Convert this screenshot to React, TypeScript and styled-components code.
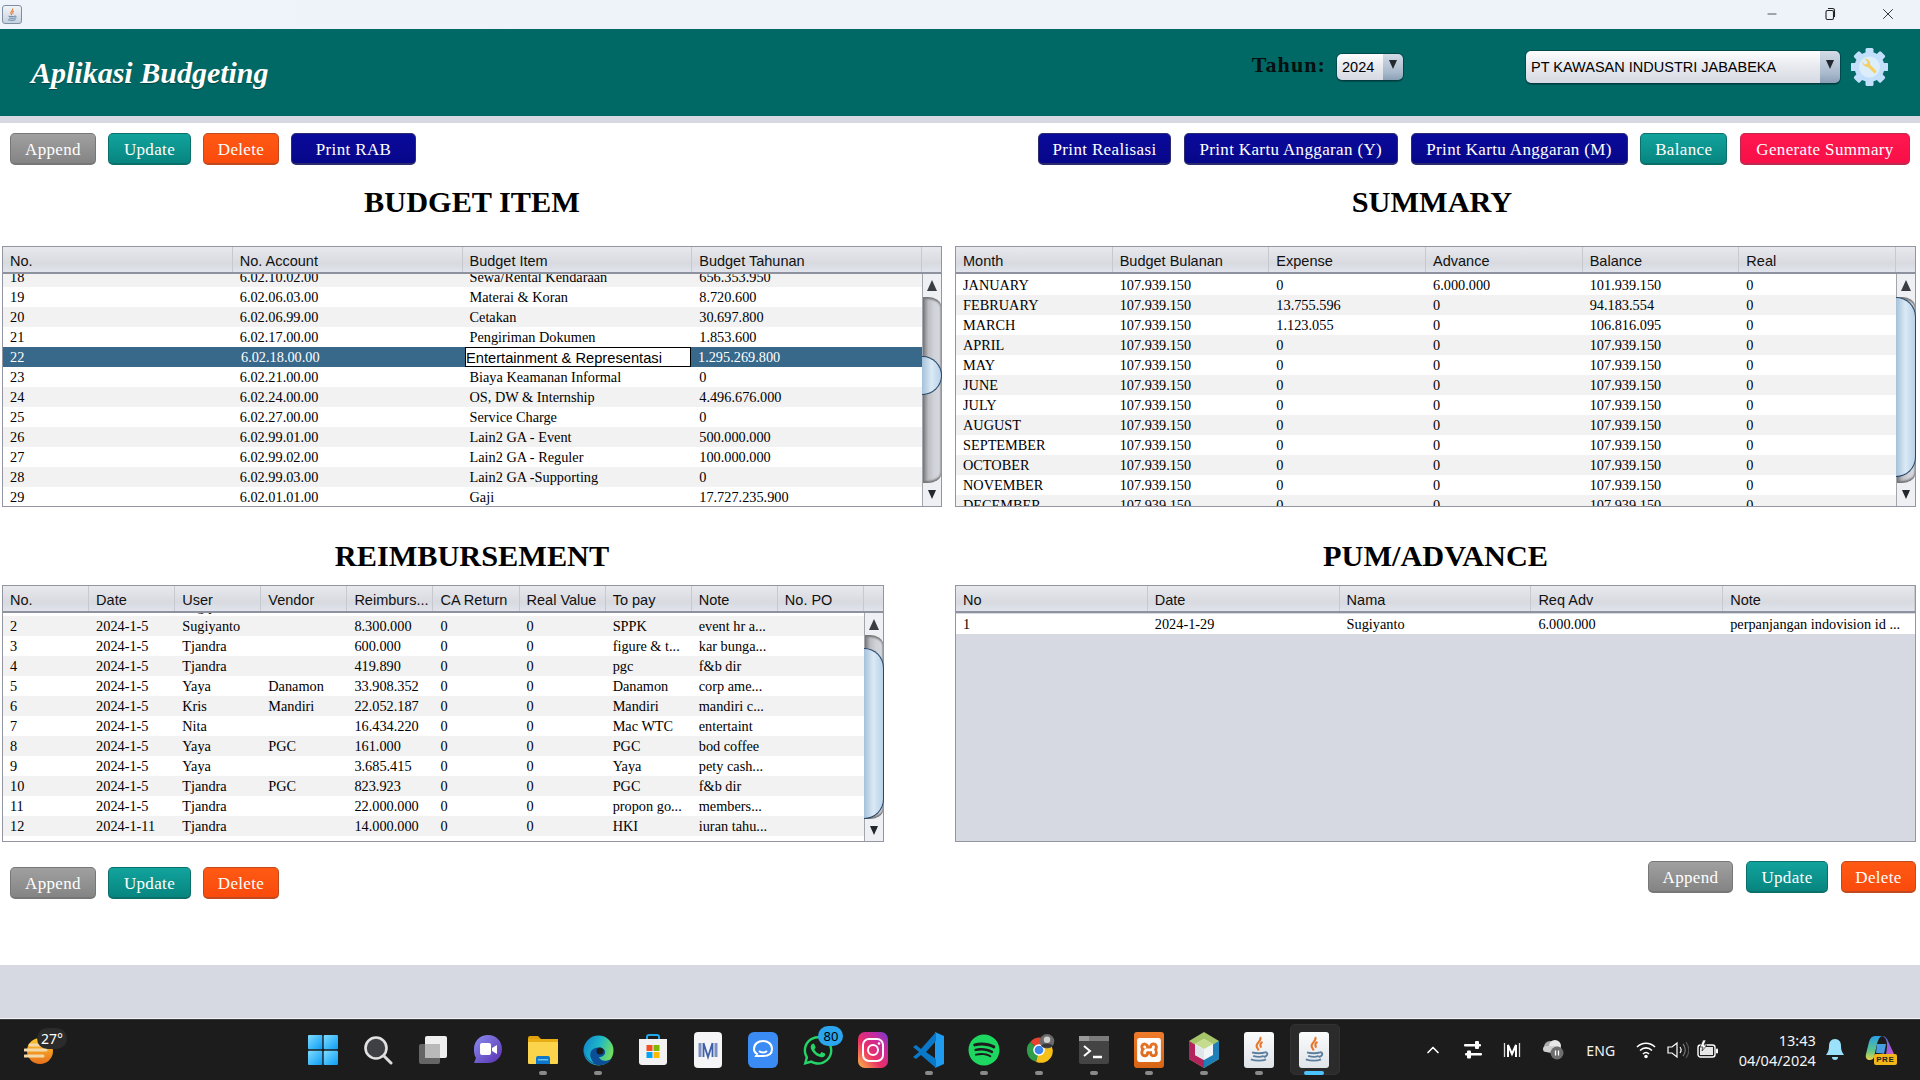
import React from "react";
import styled, { createGlobalStyle } from "styled-components";
import { FaWhatsapp, FaSpotify } from "react-icons/fa";
import { SiXampp } from "react-icons/si";
import { ChevronUp, Minus, X } from "lucide-react";

const Global = createGlobalStyle`
  html, body { margin: 0; padding: 0; height: 100%; overflow: hidden; background: #fff; }
  #root { height: 100%; }
  * { box-sizing: border-box; }
`;
const SERIF = `"Liberation Serif", "Times New Roman", serif`;
const SANS = `"Liberation Sans", Arial, sans-serif`;

const Screen = styled.div`
  width: 1920px; height: 1080px; display: flex; flex-direction: column; overflow: hidden; background: #fff; font-family: ${SERIF};
`;
const TitleBar = styled.div`
  height: 29px; flex: none; display: flex; align-items: center; padding: 0 3px 0 2px;
  background: linear-gradient(90deg, #eff3fa, #eef3fa 50%, #edf3f8);
`;
const AppIcon = styled.div`
  width: 20px; height: 19px; border: 1px solid #7f8ea3; border-radius: 3px; background: linear-gradient(#f2f5f8, #c6d2e0);
  display: flex; align-items: center; justify-content: center;
`;
const WinControls = styled.div`margin-left: auto; display: flex;`;
const WinBtn = styled.div`width: 58px; height: 29px; display: flex; align-items: center; justify-content: center; color: #222; padding-bottom: 2px;`;

const Header = styled.header`
  height: 87px; flex: none; background: #006966; display: flex; align-items: center; padding: 0 32px 0 31px;
`;
const AppTitle = styled.h1`
  margin: 0; flex: 1; color: #fff; font: italic bold 30px ${SERIF}; text-shadow: 0 1px 1px rgba(0,0,0,.35);
`;
const HeaderRight = styled.div`display: flex; align-items: center; padding-bottom: 12px;`;
const YearLabel = styled.span`
  font: bold 22px ${SERIF}; letter-spacing: 1.1px; color: #06100f; margin-right: 11px; padding-bottom: 3px;
`;
const Combo = styled.div<{ $w: number; $h: number; $gap: number }>`
  width: ${p => p.$w}px; height: ${p => p.$h}px; margin-right: ${p => p.$gap}px; display: flex; border-radius: 5px; overflow: hidden;
  box-shadow: 0 0 0 1px rgba(0,40,50,.45), 0 2px 1px rgba(0,0,0,.25); font: 14.5px ${SANS}; color: #000;
`;
const ComboValue = styled.div`
  flex: 1; display: flex; align-items: center; padding-left: 5px; white-space: nowrap;
  background: linear-gradient(#fdfdfe 0, #e9ebf0 45%, #d6d9e2 100%);
`;
const ComboArrow = styled.div`
  width: 20px; display: flex; align-items: center; justify-content: center; padding-bottom: 4px;
  background: linear-gradient(#d3dbe6, #a9bacd 70%, #8b9fb5);
`;
const TriDown = styled.span`
  width: 0; height: 0; border-left: 4px solid transparent; border-right: 4px solid transparent; border-top: 9px solid #23282e;
`;
const TriUp = styled.span`
  width: 0; height: 0; border-left: 5px solid transparent; border-right: 5px solid transparent; border-bottom: 11px solid #3a3e44;
`;
const Strip = styled.div`height: 7px; flex: none; background: #d6d9e2;`;

const Content = styled.main`flex: 1; min-height: 0; display: flex; flex-direction: column;`;
const Toolbar = styled.div`
  flex: none; display: flex; justify-content: space-between; padding: 10px 10px 0;
`;
const BtnGroup = styled.div<{ $gap: number }>`display: flex; gap: ${p => p.$gap}px;`;
const tones = {
  gray: ["#a0a0a0", "#848484", "#777"],
  teal: ["#12a39d", "#07857f", "#0b6f6b"],
  orange: ["#ff5a14", "#f94a0c", "#c04a1d"],
  navy: ["#0a0a9c", "#07078a", "#2b2b6e"],
  red: ["#ff1750", "#f80f48", "#bd2a50"],
};
type Tone = keyof typeof tones;
const Btn = styled.button<{ $tone: Tone; $w: number }>`
  width: ${p => p.$w}px; height: 32px; padding: 2px 0 0; border-radius: 5px; color: #fff; cursor: pointer;
  font: 17px ${SERIF}; letter-spacing: .35px; white-space: nowrap;
  background: linear-gradient(${p => tones[p.$tone][0]}, ${p => tones[p.$tone][1]});
  border: 1px solid ${p => tones[p.$tone][2]}; border-bottom-width: 2px;
`;
const Sections = styled.div`
  display: grid; grid-template-columns: 940px 961px; column-gap: 13px; padding: 0 4px 0 2px;
`;
const Cell = styled.section``;
const Heading = styled.h2<{ $h: number; $pt?: number; $pb?: number; $shift?: number }>`
  margin: 0; height: ${p => p.$h}px; padding: ${p => p.$pt ?? 0}px ${p => p.$shift ?? 0}px ${p => p.$pb ?? 0}px 0;
  display: flex; align-items: center; justify-content: center; font: bold 30.3px ${SERIF}; color: #000;
`;
const Frame = styled.div<{ $h: number; $w?: number; $fill?: boolean }>`
  height: ${p => p.$h}px; width: ${p => (p.$w ? p.$w + "px" : "100%")}; display: flex; flex-direction: column;
  border: 1px solid #9396a2; background: ${p => (p.$fill ? "#d6d9e2" : "#fff")};
`;
const HeadRow = styled.div<{ $h: number }>`
  height: ${p => p.$h}px; flex: none; display: flex; border-bottom: 2px solid #8e929e; font: 14.5px ${SANS}; color: #111;
  background: linear-gradient(#e8e9ed, #d8dae0 65%, #e1e4ec);
`;
const HeadCell = styled.div`
  flex: 1 1 0; min-width: 0; padding: 2px 0 0 7px; display: flex; align-items: center; border-right: 1px solid #c7c9d1; white-space: nowrap; overflow: hidden;
`;
const HeadCorner = styled.div`width: 19px; flex: none;`;
const Body = styled.div`flex: 1; min-height: 0; display: flex;`;
const Viewport = styled.div`flex: 1; min-width: 0; overflow: hidden;`;
const Rows = styled.div<{ $offset: number }>`margin-top: ${p => p.$offset}px;`;
const Row = styled.div<{ $alt?: boolean; $sel?: boolean }>`
  height: 20px; display: flex; font-size: 14.3px; color: ${p => (p.$sel ? "#fff" : "#000")};
  background: ${p => (p.$sel ? "#38688a" : p.$alt ? "#f2f2f2" : "#fff")};
`;
const Td = styled.div`
  flex: 1 1 0; min-width: 0; padding-left: 7px; line-height: 20px; white-space: nowrap; overflow: hidden;
`;
const EditTd = styled.div`
  flex: 1 1 0; min-width: 0; padding: 2px 0 0 0; background: #fff; color: #000; border: 1px solid #000; font: 14.7px/16px ${SANS}; white-space: nowrap; overflow: hidden;
`;
const Scroll = styled.div`
  width: 19px; flex: none; display: flex; flex-direction: column; background: #eff0f3; border-left: 1px solid #a4a6ad;
`;
const ScrollEnd = styled.div<{ $h: number }>`
  height: ${p => p.$h}px; flex: none; display: flex; align-items: center; justify-content: center;
`;
const Track = styled.div`
  position: relative; flex: 1; border-radius: 0 13px 13px 0 / 0 9px 9px 0; box-shadow: inset 0 2px 2px #777, inset 0 -2px 2px #777;
  background: linear-gradient(90deg, #77797d, #bcbec3 30%, #d0d2d8 60%, #d6d9e2);
`;
const Thumb = styled.div`
  position: absolute; left: -1px; right: -1px; border: 1.5px solid #27486a; border-left: none; border-radius: 0 20px 20px 0 / 0 20px 20px 0;
  background: linear-gradient(90deg, #a4c1da, #dbe9f5 50%, #b9d2e8);
`;
const BottomLeft = styled.div`padding: 25px 0 0 8px;`;
const BottomRight = styled.div`display: flex; justify-content: flex-end; padding-top: 19px;`;
const Spacer = styled.div`flex: 1;`;
const BottomStrip = styled.div`height: 54px; flex: none; background: #d6d9e2; border-bottom: 1px solid #f1f2f5;`;

const Taskbar = styled.footer`
  height: 61px; flex: none; background: #1c1c1c; border-top: 1px solid #3a3a3a; display: flex; align-items: stretch; color: #fff; font-family: "Noto Sans", ${SANS};
`;
const Weather = styled.div`width: 295px; flex: none; position: relative;`;
const WeatherIcon = styled.div`position: absolute; left: 24px; top: 17px;`;
const WeatherTemp = styled.span`
  position: absolute; left: 37px; top: 8px; background: #2b2b2b; border-radius: 11px; padding: 0 4px; font-size: 14px; line-height: 21px; color: #fff;
`;
const Apps = styled.div`display: flex;`;
const AppSlot = styled.div`
  width: 55.1px; position: relative; display: flex; align-items: center; justify-content: center;
`;
const AppActive = styled.div`
  position: absolute; left: 3px; right: 2px; top: 4px; bottom: 5px; background: #2b2b2b; border: 1px solid #323232; border-radius: 5px;
`;
const IconWrap = styled.div`position: relative; width: 32px; height: 32px; display: flex; align-items: center; justify-content: center;`;
const RunDot = styled.span<{ $active?: boolean }>`
  position: absolute; bottom: 5px; left: 50%; transform: translateX(-50%); height: 4px; border-radius: 2px;
  width: ${p => (p.$active ? 20 : 8)}px; background: ${p => (p.$active ? "#4cc2ff" : "#8a8a8a")};
`;
const Badge = styled.span`
  position: absolute; right: -9px; top: -8px; width: 25px; height: 20px; border-radius: 10px; background: #2aa5ee; color: #000; font-size: 13px; line-height: 20px; text-align: center;
`;
const Tray = styled.div`display: flex; align-items: center; padding-left: 71px;`;
const TraySlot = styled.div<{ $w: number }>`width: ${p => p.$w}px; display: flex; align-items: center; justify-content: center;`;
const Lang = styled.span`font-size: 14px; color: #f2f2f2; letter-spacing: .2px;`;
const Clock = styled.div`width: 92px; text-align: right; font-size: 14.5px; line-height: 20px; color: #f4f4f4;`;

/* ---------- icons ---------- */
const JavaCup = ({ s = 14 }: { s?: number }) => (
  <svg width={s} height={s} viewBox="0 0 24 24" fill="none">
    <path d="M13 1c2 3-4 5-3 8 .4 1.400 1.500 2 1.500 3.500M15 5c-3 1.500-1.800 3.500-1.200 5" stroke="#e8752a" strokeWidth="1.800" />
    <path d="M6 14c3 1 9 1 11 0M7 17c3 1 7 1 9 0M5 20c4 1.500 10 1.500 13 0M17 14c3-.5 3 3-1 4" stroke="#5c7f9f" strokeWidth="1.600" />
  </svg>
);
const Restore = () => (
  <svg width="14" height="14" viewBox="0 0 14 14" fill="none" stroke="#222" strokeWidth="1.100">
    <rect x="3" y="3.500" width="7.500" height="9" rx="1.500" />
    <path d="M5 1.500h4.500a2 2 0 0 1 2 2V10" />
  </svg>
);
const Gear = () => (
  <svg width="37" height="38" viewBox="0 0 37 38">
    <g fill="#c2e0fb">
      <circle cx="18.500" cy="19" r="15" />
      {[0, 45, 90, 135, 180, 225, 270, 315].map(a => (
        <rect key={a} x="14.500" y="0" width="8" height="7" rx="1.500" transform={`rotate(${a} 18.500 19)`} />
      ))}
    </g>
    <circle cx="18.500" cy="19" r="10.500" fill="#dcedfb" />
    <path d="M11.500 13.500a5 5 0 0 0 5.500 5.500l6 6c1 1 3.300-1 2.200-2.200l-6-6a5 5 0 0 0-5.700-6l3 3-.6 2.200-2.200.5z" fill="#f7cf62" />
  </svg>
);
const Sun = () => (
  <svg width="30" height="30" viewBox="0 0 30 30">
    <defs><linearGradient id="sn" x1="0" y1="0" x2="0" y2="1"><stop offset="0" stopColor="#fdc92e" /><stop offset="1" stopColor="#e8701c" /></linearGradient></defs>
    <circle cx="16" cy="14" r="13" fill="url(#sn)" />
    <g stroke="#f3d9a8" strokeWidth="3" strokeLinecap="round"><path d="M6 8h12M1 13h21M1 19h18" /></g>
  </svg>
);
const StartIcon = () => (
  <svg width="30" height="30" viewBox="0 0 30 30">
    <defs><linearGradient id="st" x1="0" y1="0" x2="1" y2="1"><stop offset="0" stopColor="#7fdcff" /><stop offset="1" stopColor="#0a9cf5" /></linearGradient></defs>
    <g fill="url(#st)"><rect x="0" y="0" width="14.300" height="14.300" rx="1" /><rect x="15.700" y="0" width="14.300" height="14.300" rx="1" /><rect x="0" y="15.700" width="14.300" height="14.300" rx="1" /><rect x="15.700" y="15.700" width="14.300" height="14.300" rx="1" /></g>
  </svg>
);
const SearchIcon = () => (
  <svg width="30" height="30" viewBox="0 0 30 30">
    <circle cx="13" cy="13" r="10.500" fill="#3f4043" stroke="#e2e2e2" strokeWidth="2.600" />
    <path d="M21 21l7 7" stroke="#dcdcdc" strokeWidth="3" strokeLinecap="round" />
  </svg>
);
const TaskView = () => (
  <svg width="30" height="30" viewBox="0 0 30 30">
    <rect x="7" y="1" width="22" height="22" rx="2" fill="#efefef" />
    <rect x="1" y="9" width="21" height="20" rx="2" fill="#6b6b6b" opacity=".92" />
    <rect x="7" y="9" width="15" height="14" fill="#b9b9b9" />
  </svg>
);
const Meet = () => (
  <svg width="30" height="32" viewBox="0 0 30 32">
    <defs><linearGradient id="mt" x1="0" y1="0" x2="1" y2="1"><stop offset="0" stopColor="#8a8ef0" /><stop offset="1" stopColor="#5a2fb0" /></linearGradient></defs>
    <path d="M15 1c8 0 14 6 14 14s-6 14-14 14H1l2-5C1 21 1 18 1 15 1 7 7 1 15 1z" fill="url(#mt)" />
    <rect x="7" y="9" width="11" height="12" rx="2" fill="#fff" /><path d="M19 14l5-3v9l-5-3z" fill="#fff" />
  </svg>
);
const Folder = () => (
  <svg width="32" height="30" viewBox="0 0 32 30">
    <path d="M1 3a2 2 0 0 1 2-2h8l3 3h-13z" fill="#e0a10c" /><rect x="1" y="4" width="30" height="6" fill="#e9ae16" />
    <rect x="1" y="7" width="30" height="22" rx="1" fill="#fbd44c" />
    <path d="M9 29v-6a2 2 0 0 1 2-2h10a2 2 0 0 1 2 2v6z" fill="#0d78c9" /><rect x="11" y="24" width="10" height="1.500" fill="#6fc0f5" />
  </svg>
);
const Edge = () => (
  <svg width="31" height="31" viewBox="0 0 31 31">
    <defs>
      <linearGradient id="ed" x1="0" y1="0" x2="1" y2=".4"><stop offset="0" stopColor="#0f80cc" /><stop offset=".55" stopColor="#1fb7c8" /><stop offset="1" stopColor="#6fdc62" /></linearGradient>
    </defs>
    <circle cx="15.500" cy="15.500" r="15" fill="url(#ed)" />
    <path d="M1 17c2 9 10 14 18 13 5-1 8-3 9-6-5 3-11 2-12-2 3 0 7-2 6-6s-9-5-13-1c-3 3-2 9 2 13-4-1-8-6-10-11z" fill="#0c4f99" />
    <circle cx="17" cy="16" r="3.500" fill="#1c1c1c" />
  </svg>
);
const Store = () => (
  <svg width="30" height="32" viewBox="0 0 30 32">
    <path d="M9 6V3a2 2 0 0 1 2-2h8a2 2 0 0 1 2 2v3" fill="none" stroke="#22a8e8" strokeWidth="2" />
    <path d="M1 5h28v23a3 3 0 0 1-3 3H4a3 3 0 0 1-3-3z" fill="#f2f2f2" />
    <rect x="8.500" y="11" width="6" height="6" fill="#f25022" /><rect x="15.500" y="11" width="6" height="6" fill="#7fba00" /><rect x="8.500" y="18" width="6" height="6" fill="#00a4ef" /><rect x="15.500" y="18" width="6" height="6" fill="#ffb900" />
  </svg>
);
const MTile = () => (
  <svg width="28" height="36" viewBox="0 0 28 36">
    <rect width="28" height="36" rx="4" fill="#f5f5f7" />
    <path d="M6 11v14M22 11v14" fill="none" stroke="#7a90c4" strokeWidth="3" />
    <path d="M9.500 11v14M18.500 11v14M9.500 11l4.500 14 4.500-14" fill="none" stroke="#3f5fa8" strokeWidth="1.800" />
  </svg>
);
const TrayM = () => (
  <svg width="18" height="18" viewBox="0 0 18 18">
    <path d="M1.500 2v14" stroke="#ddd" strokeWidth="1.300" fill="none" />
    <path d="M5 16V4l4 9 4-9v12" stroke="#fff" strokeWidth="2" fill="none" />
    <path d="M16.500 2v14" stroke="#ddd" strokeWidth="1.300" fill="none" />
  </svg>
);
const BlueChat = () => (
  <svg width="30" height="36" viewBox="0 0 30 36">
    <rect width="30" height="36" rx="6" fill="#3b8bf5" />
    <path d="M6 17c0-5 4-8 9-8s9 3 9 8-4 7-9 7h-7l1-2c-2-1-3-3-3-5z" fill="none" stroke="#fff" strokeWidth="2" />
    <path d="M11 19c2 2 6 2 8 0" fill="none" stroke="#fff" strokeWidth="2" />
  </svg>
);
const Insta = () => (
  <svg width="30" height="36" viewBox="0 0 30 36">
    <defs><linearGradient id="ig" x1="0" y1="1" x2="1" y2="0"><stop offset="0" stopColor="#fbbb45" /><stop offset=".4" stopColor="#ea2f66" /><stop offset=".75" stopColor="#c32aa3" /><stop offset="1" stopColor="#6a3fd0" /></linearGradient></defs>
    <rect width="30" height="36" rx="7" fill="url(#ig)" />
    <rect x="5" y="7" width="20" height="22" rx="6" fill="none" stroke="#fff" strokeWidth="2" />
    <circle cx="15" cy="18" r="5" fill="none" stroke="#fff" strokeWidth="2" /><circle cx="21" cy="11.500" r="1.300" fill="#fff" />
  </svg>
);
const VsCode = () => (
  <svg width="31" height="36" viewBox="0 0 31 36">
    <path d="M22 0l9 4v28l-9 4z" fill="#1f9cf0" /><path d="M23 0L8 17l-5-4-3 2 6 5-6 5 3 2 5-4 15 13v-9L13 20l10-11z" fill="#0a78c8" />
  </svg>
);
const Chrome = () => (
  <svg width="44" height="46" viewBox="0 0 44 46">
    <g transform="translate(6 5)">
      <path d="M16 18L4 7a16 16 0 0 1 26 1z" fill="#e8422f" /><path d="M16 18L4 7a16 16 0 0 0 8 27z" fill="#2e9e4a" /><path d="M16 18L30 8a16 16 0 0 1-18 26z" fill="#f6c018" />
      <circle cx="16" cy="18" r="8" fill="#fff" /><circle cx="16" cy="18" r="6" fill="#3b84ec" />
    </g>
    <circle cx="33" cy="11" r="10" fill="#6b6b6b" /><circle cx="33" cy="9" r="4.500" fill="#cfcfcf" /><path d="M25 17c3-4 13-4 16 0-3 4-13 4-16 0z" fill="#3a3a3a" />
  </svg>
);
const Terminal = () => (
  <svg width="30" height="28" viewBox="0 0 30 28">
    <rect width="30" height="28" rx="2" fill="#444" /><rect width="30" height="5" fill="#7b7b7b" /><rect width="10" height="5" fill="#9a9a9a" />
    <path d="M5 10l6 5-6 5" fill="none" stroke="#fff" strokeWidth="2" /><path d="M14 21h9" stroke="#fff" strokeWidth="2.500" />
  </svg>
);
const XamppTile = styled.div`
  width: 30px; height: 36px; border-radius: 3px; background: linear-gradient(#ee7a2c, #d86416); display: flex; align-items: center; justify-content: center; color: #fff;
`;
const NetBeans = () => (
  <svg width="30" height="36" viewBox="0 0 30 36">
    <path d="M15 0l15 9v18l-15 9L0 27V9z" fill="#a6c46a" /><path d="M0 9l15 9v18L0 27z" fill="#b4245c" /><path d="M30 9L15 18v18l15-9z" fill="#1f7fb8" />
    <path d="M15 7l9 5v11l-9 5-9-5V12z" fill="#f1f5f8" /><path d="M15 7l9 5-9 5-9-5z" fill="#c5dc8e" /><path d="M6 12l9 5v11l-9-5z" fill="#dfe6ea" />
  </svg>
);
const JavaTileBox = styled.div`
  width: 30px; height: 36px; border-radius: 3px; background: linear-gradient(#fbfbfb, #dfe4ea); display: flex; align-items: center; justify-content: center;
`;
const Sliders = () => (
  <svg width="18" height="18" viewBox="0 0 18 18" fill="#fff"><rect x="0" y="3" width="17" height="2.500" rx="1" /><rect x="11" y="0" width="4" height="8" rx="1" /><rect x="1" y="12" width="17" height="2.500" rx="1" /><rect x="3" y="9.500" width="4" height="8" rx="1" /></svg>
);
const CloudPause = () => (
  <svg width="22" height="20" viewBox="0 0 22 20">
    <circle cx="8" cy="7" r="6" fill="#aaa" /><circle cx="13" cy="6" r="6" fill="#e8e8e8" /><rect x="1" y="6" width="17" height="6" rx="3" fill="#cfcfcf" />
    <circle cx="15" cy="13" r="6.500" fill="#6e6e6e" /><path d="M13.500 10.500v5M16.500 10.500v5" stroke="#fff" strokeWidth="1.300" />
  </svg>
);
const Wifi = () => (
  <svg width="20" height="18" viewBox="0 0 20 18" fill="none" stroke="#fff" strokeWidth="1.600">
    <path d="M1 6c5-5 13-5 18 0M4 9.500c3.500-3.500 8.500-3.500 12 0M7 13c2-2 4-2 6 0" /><circle cx="10" cy="15.500" r="1" fill="#fff" />
  </svg>
);
const Volume = () => (
  <svg width="22" height="20" viewBox="0 0 22 20" fill="none" stroke="#fff" strokeWidth="1.200">
    <path d="M1 7h4l5-4v14l-5-4H1z" /><path d="M13 7c1.500 2 1.500 4 0 6" /><path d="M16 4c3 3.500 3 8.500 0 12" stroke="#777" /><path d="M19 2c3.500 5 3.500 11 0 16" stroke="#555" />
  </svg>
);
const Battery = () => (
  <svg width="22" height="20" viewBox="0 0 22 20">
    <rect x="1" y="5" width="17" height="12" rx="2.500" fill="none" stroke="#fff" strokeWidth="1.400" /><rect x="3" y="7" width="13" height="8" fill="#e6e6e6" /><rect x="19" y="8.500" width="2" height="5" rx="1" fill="#fff" />
    <path d="M6 0L3 7h3l-1 4 5-6H7l2-5z" fill="#fff" stroke="#1c1c1c" strokeWidth=".7" />
  </svg>
);
const Bell = () => (
  <svg width="18" height="24" viewBox="0 0 18 24">
    <path d="M9 1c-4 0-6 3-6 7 0 4-1 6-3 9h18c-2-3-3-5-3-9 0-4-2-7-6-7z" fill="#9be1fb" /><path d="M6 19a3 3 0 0 0 6 0z" fill="#9be1fb" />
  </svg>
);
const CopilotBox = styled.div`position: relative; width: 30px; height: 30px;`;
const PreTag = styled.span`
  position: absolute; right: -2px; bottom: 0; width: 23px; height: 11px; background: #f3b619; color: #222; border-radius: 2px; font: bold 8px/11px ${SANS}; text-align: center; letter-spacing: .6px;
`;
const Copilot = () => (
  <svg width="30" height="26" viewBox="0 0 30 26">
    <defs>
      <linearGradient id="c1" x1="0" y1="0" x2="0" y2="1"><stop offset="0" stopColor="#2ba0e8" /><stop offset=".6" stopColor="#5cc58a" /><stop offset="1" stopColor="#e9d24a" /></linearGradient>
      <linearGradient id="c2" x1="0" y1="0" x2="1" y2="1"><stop offset="0" stopColor="#3d7de0" /><stop offset=".6" stopColor="#a85ad8" /><stop offset="1" stopColor="#ef62a8" /></linearGradient>
    </defs>
    <path d="M10 1h7c-3 1-4 4-5 8l-3 13c-.5 2-2 3-4 3-3 0-5-2-4-6l3-12C5 3 7 1 10 1z" fill="url(#c1)" />
    <path d="M17 1c3 0 5 2 6 5l6 13c1 3-1 6-4 6h-9c3 0 4-2 5-5l1-8c.5-5-1-10-5-11z" fill="url(#c2)" />
    <path d="M12 9h9l-2 10c-2-1-5-1-8-1z" fill="#4a9ce0" />
  </svg>
);

/* ---------- data ---------- */
const budget = [
  ["18", "6.02.10.02.00", "Sewa/Rental Kendaraan", "656.353.950"],
  ["19", "6.02.06.03.00", "Materai & Koran", "8.720.600"],
  ["20", "6.02.06.99.00", "Cetakan", "30.697.800"],
  ["21", "6.02.17.00.00", "Pengiriman Dokumen", "1.853.600"],
  ["22", "6.02.18.00.00", "Entertainment & Representasi", "1.295.269.800"],
  ["23", "6.02.21.00.00", "Biaya Keamanan Informal", "0"],
  ["24", "6.02.24.00.00", "OS, DW & Internship", "4.496.676.000"],
  ["25", "6.02.27.00.00", "Service Charge", "0"],
  ["26", "6.02.99.01.00", "Lain2 GA - Event", "500.000.000"],
  ["27", "6.02.99.02.00", "Lain2 GA - Reguler", "100.000.000"],
  ["28", "6.02.99.03.00", "Lain2 GA -Supporting", "0"],
  ["29", "6.02.01.01.00", "Gaji", "17.727.235.900"],
];
const B = "107.939.150";
const summary = [
  ["JANUARY", B, "0", "6.000.000", "101.939.150", "0"],
  ["FEBRUARY", B, "13.755.596", "0", "94.183.554", "0"],
  ["MARCH", B, "1.123.055", "0", "106.816.095", "0"],
  ...["APRIL", "MAY", "JUNE", "JULY", "AUGUST", "SEPTEMBER", "OCTOBER", "NOVEMBER", "DECEMBER"].map(m => [m, B, "0", "0", B, "0"]),
];
const r = (n: string, d: string, u: string, v: string, a: string, p: string, note: string) => [n, d, u, v, a, "0", "0", p, note, ""];
const reimb = [
  r("1", "2024-1-5", "Sugiyanto", "", "1.500.000", "SPPK", "event hr a..."),
  r("2", "2024-1-5", "Sugiyanto", "", "8.300.000", "SPPK", "event hr a..."),
  r("3", "2024-1-5", "Tjandra", "", "600.000", "figure & t...", "kar bunga..."),
  r("4", "2024-1-5", "Tjandra", "", "419.890", "pgc", "f&b dir"),
  r("5", "2024-1-5", "Yaya", "Danamon", "33.908.352", "Danamon", "corp ame..."),
  r("6", "2024-1-5", "Kris", "Mandiri", "22.052.187", "Mandiri", "mandiri c..."),
  r("7", "2024-1-5", "Nita", "", "16.434.220", "Mac WTC", "entertaint"),
  r("8", "2024-1-5", "Yaya", "PGC", "161.000", "PGC", "bod coffee"),
  r("9", "2024-1-5", "Yaya", "", "3.685.415", "Yaya", "pety cash..."),
  r("10", "2024-1-5", "Tjandra", "PGC", "823.923", "PGC", "f&b dir"),
  r("11", "2024-1-5", "Tjandra", "", "22.000.000", "propon go...", "members..."),
  r("12", "2024-1-11", "Tjandra", "", "14.000.000", "HKI", "iuran tahu..."),
];
const pum = [["1", "2024-1-29", "Sugiyanto", "6.000.000", "perpanjangan indovision id ..."]];

type GridProps = {
  height: number; headH: number; head: string[]; rows: string[][]; offset: number; firstAlt: boolean;
  width?: number; selected?: number; editCol?: number; fill?: boolean;
  scroll?: { end: number; top: number; h: number };
};
const DataGrid = ({ height, headH, head, rows, offset, firstAlt, width, selected, editCol, fill, scroll }: GridProps) => (
  <Frame $h={height} $w={width} $fill={fill}>
    <HeadRow $h={headH}>
      {head.map(h => <HeadCell key={h}>{h}</HeadCell>)}
      {scroll && <HeadCorner />}
    </HeadRow>
    <Body>
      <Viewport>
        <Rows $offset={offset}>
          {rows.map((row, i) => (
            <Row key={row[0]} $alt={(i % 2 === 0) === firstAlt} $sel={i === selected}>
              {row.map((c, j) => i === selected && j === editCol
                ? <EditTd key={j}>{c}</EditTd>
                : <Td key={j}>{c}</Td>)}
            </Row>
          ))}
        </Rows>
      </Viewport>
      {scroll && (
        <Scroll>
          <ScrollEnd $h={scroll.end}><TriUp /></ScrollEnd>
          <Track><Thumb style={{ top: scroll.top, height: scroll.h }} /></Track>
          <ScrollEnd $h={scroll.end}><TriDown /></ScrollEnd>
        </Scroll>
      )}
    </Body>
  </Frame>
);

const apps: { node: React.ReactNode; run?: boolean; active?: boolean }[] = [
  { node: <StartIcon /> },
  { node: <SearchIcon /> },
  { node: <TaskView /> },
  { node: <Meet /> },
  { node: <Folder />, run: true },
  { node: <Edge />, run: true },
  { node: <Store /> },
  { node: <MTile /> },
  { node: <BlueChat /> },
  { node: <><FaWhatsapp size={33} color="#25d366" /><Badge>80</Badge></> },
  { node: <Insta /> },
  { node: <VsCode />, run: true },
  { node: <FaSpotify size={32} color="#1ed760" />, run: true },
  { node: <Chrome />, run: true },
  { node: <Terminal />, run: true },
  { node: <XamppTile><SiXampp size={24} /></XamppTile>, run: true },
  { node: <NetBeans />, run: true },
  { node: <JavaTileBox><JavaCup s={28} /></JavaTileBox>, run: true },
  { node: <JavaTileBox><JavaCup s={28} /></JavaTileBox>, run: true, active: true },
];

export default function App() {
  return (
    <Screen>
      <Global />
      <TitleBar>
        <AppIcon><JavaCup s={14} /></AppIcon>
        <WinControls>
          <WinBtn><Minus size={14} strokeWidth={1.3} /></WinBtn>
          <WinBtn><Restore /></WinBtn>
          <WinBtn><X size={18} strokeWidth={1.2} /></WinBtn>
        </WinControls>
      </TitleBar>
      <Header>
        <AppTitle>Aplikasi Budgeting</AppTitle>
        <HeaderRight>
          <YearLabel>Tahun:</YearLabel>
          <Combo $w={66} $h={26} $gap={123}>
            <ComboValue>2024</ComboValue>
            <ComboArrow><TriDown /></ComboArrow>
          </Combo>
          <Combo $w={314} $h={32} $gap={11}>
            <ComboValue>PT KAWASAN INDUSTRI JABABEKA</ComboValue>
            <ComboArrow><TriDown /></ComboArrow>
          </Combo>
          <Gear />
        </HeaderRight>
      </Header>
      <Strip />
      <Content>
        <Toolbar>
          <BtnGroup $gap={12}>
            <Btn $tone="gray" $w={86}>Append</Btn>
            <Btn $tone="teal" $w={83}>Update</Btn>
            <Btn $tone="orange" $w={76}>Delete</Btn>
            <Btn $tone="navy" $w={125}>Print RAB</Btn>
          </BtnGroup>
          <BtnGroup $gap={12.75}>
            <Btn $tone="navy" $w={133}>Print Realisasi</Btn>
            <Btn $tone="navy" $w={214}>Print Kartu Anggaran (Y)</Btn>
            <Btn $tone="navy" $w={217}>Print Kartu Anggaran (M)</Btn>
            <Btn $tone="teal" $w={87}>Balance</Btn>
            <Btn $tone="red" $w={170}>Generate Summary</Btn>
          </BtnGroup>
        </Toolbar>
        <Sections>
          <Cell>
            <Heading $h={81} $pb={6}>BUDGET ITEM</Heading>
            <DataGrid
              height={261} headH={27} offset={-7} firstAlt
              head={["No.", "No. Account", "Budget Item", "Budget Tahunan"]}
              rows={budget} selected={4} editCol={2}
              scroll={{ end: 23, top: 59, h: 39 }}
            />
          </Cell>
          <Cell>
            <Heading $h={81} $pb={6} $shift={7}>SUMMARY</Heading>
            <DataGrid
              height={261} headH={27} offset={1} firstAlt={false}
              head={["Month", "Budget Bulanan", "Expense", "Advance", "Balance", "Real"]}
              rows={summary}
              scroll={{ end: 23, top: 0, h: 180 }}
            />
          </Cell>
          <Cell>
            <Heading $h={78} $pt={20}>REIMBURSEMENT</Heading>
            <DataGrid
              height={257} headH={27} offset={-17} firstAlt={false} width={882}
              head={["No.", "Date", "User", "Vendor", "Reimburs...", "CA Return", "Real Value", "To pay", "Note", "No. PO"]}
              rows={reimb}
              scroll={{ end: 22, top: 13, h: 171 }}
            />
          </Cell>
          <Cell>
            <Heading $h={78} $pt={20}>PUM/ADVANCE</Heading>
            <DataGrid
              height={257} headH={27} offset={1} firstAlt={false} fill
              head={["No", "Date", "Nama", "Req Adv", "Note"]}
              rows={pum}
            />
          </Cell>
          <BottomLeft>
            <BtnGroup $gap={12}>
              <Btn $tone="gray" $w={86}>Append</Btn>
              <Btn $tone="teal" $w={83}>Update</Btn>
              <Btn $tone="orange" $w={76}>Delete</Btn>
            </BtnGroup>
          </BottomLeft>
          <BottomRight>
            <BtnGroup $gap={13}>
              <Btn $tone="gray" $w={85}>Append</Btn>
              <Btn $tone="teal" $w={82}>Update</Btn>
              <Btn $tone="orange" $w={75}>Delete</Btn>
            </BtnGroup>
          </BottomRight>
        </Sections>
        <Spacer />
      </Content>
      <BottomStrip />
      <Taskbar>
        <Weather>
          <WeatherIcon><Sun /></WeatherIcon>
          <WeatherTemp>27°</WeatherTemp>
        </Weather>
        <Apps>
          {apps.map((a, i) => (
            <AppSlot key={i}>
              {a.active && <AppActive />}
              <IconWrap>{a.node}</IconWrap>
              {a.run && <RunDot $active={a.active} />}
            </AppSlot>
          ))}
        </Apps>
        <Tray>
          <TraySlot $w={40}><ChevronUp size={20} color="#fff" strokeWidth={2} /></TraySlot>
          <TraySlot $w={40}><Sliders /></TraySlot>
          <TraySlot $w={39}><TrayM /></TraySlot>
          <TraySlot $w={42}><CloudPause /></TraySlot>
          <TraySlot $w={54}><Lang>ENG</Lang></TraySlot>
          <TraySlot $w={37}><Wifi /></TraySlot>
          <TraySlot $w={27}><Volume /></TraySlot>
          <TraySlot $w={32}><Battery /></TraySlot>
          <Clock>13:43<br />04/04/2024</Clock>
          <TraySlot $w={39}><Bell /></TraySlot>
          <TraySlot $w={50}>
            <CopilotBox><Copilot /><PreTag>PRE</PreTag></CopilotBox>
          </TraySlot>
        </Tray>
      </Taskbar>
    </Screen>
  );
}
